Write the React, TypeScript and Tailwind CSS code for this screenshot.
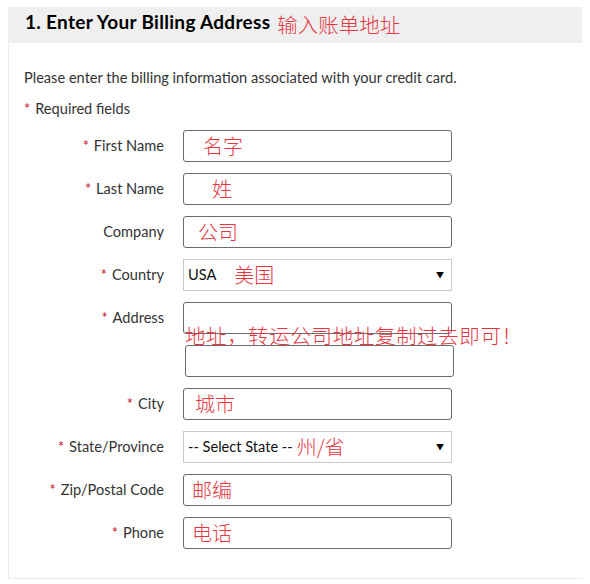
const RED = 'text-[#e5353f]';

function Label({ text, required }: { text: string; required?: boolean }) {
  return (
    <div className="w-[155px] shrink-0 text-right text-[14.6px] text-[#333]">
      {required && <span className="text-[#c8102e] mr-[5px]">*</span>}
      {text}
    </div>
  );
}

function Box({ note, pad }: { note?: string; pad: string }) {
  return (
    <div className={`w-[269px] h-[32px] border border-[#6b6b6b] rounded-[3px] flex items-center ${pad}`}>
      <span className={`${RED} text-[20px] leading-none cjk`}>{note}</span>
    </div>
  );
}

function Select({ value, note, gap }: { value: string; note: string; gap: string }) {
  return (
    <div className="w-[269px] h-[32px] border border-[#c8c8c8] flex items-center pl-[4px] pr-[7px]">
      <span className="text-[14.6px] text-[#111]">{value}</span>
      <span className={`${RED} text-[20px] leading-none cjk ${gap}`}>{note}</span>
      <span className="ml-auto text-[8px] text-black">▼</span>
    </div>
  );
}

function Row({ label, required, children }: { label: string; required?: boolean; children: React.ReactNode }) {
  return (
    <div className="flex items-center gap-[19px]">
      <Label text={label} required={required} />
      {children}
    </div>
  );
}

export default function App() {
  return (
    <div className="w-[590px] h-[584px] bg-white pt-[7px] pl-[8px]" style={{ fontFamily: 'Lato, "Noto Sans CJK SC", sans-serif' }}>
      <style>{`.cjk{font-family:"Noto Sans CJK SC",sans-serif;font-weight:300}`}</style>
      <div className="w-[574px] h-[572px] border-l border-b border-[#ececec]">
        <div className="h-[36px] bg-[#efefef] flex items-center pl-[16px]">
          <span className="text-[19px] font-bold text-black tracking-[0.3px] -mt-[5px]">1. Enter Your Billing Address</span>
          <span className={`${RED} text-[20.5px] cjk ml-[7px] -mt-[1px]`}>输入账单地址</span>
        </div>
        <p className="mt-[25px] pl-[15px] text-[14.6px] text-[#333] leading-[20px]">
          Please enter the billing information associated with your credit card.
        </p>
        <p className="mt-[11px] pl-[15px] text-[14.6px] text-[#333] leading-[20px]">
          <span className="text-[#c8102e] mr-[5px]">*</span>Required fields
        </p>
        <div className="mt-[11px] flex flex-col gap-[11px]">
          <Row label="First Name" required>
            <Box note="名字" pad="pl-[19px]" />
          </Row>
          <Row label="Last Name" required>
            <Box note="姓" pad="pl-[28px]" />
          </Row>
          <Row label="Company">
            <Box note="公司" pad="pl-[14px]" />
          </Row>
          <Row label="Country" required>
            <Select value="USA" note="美国" gap="ml-[18px]" />
          </Row>
          <div className="flex gap-[19px] relative">
            <div className="h-[32px] flex items-center">
              <Label text="Address" required />
            </div>
            <div className="flex flex-col gap-[11px]">
              <Box pad="" />
              <div className="ml-[2px]">
                <Box pad="" />
              </div>
            </div>
            <span className={`absolute left-[176px] top-[23px] ${RED} text-[20.5px] leading-none cjk whitespace-nowrap tracking-[0.6px]`}>
              地址，转运公司地址复制过去即可！
            </span>
          </div>
          <Row label="City" required>
            <Box note="城市" pad="pl-[11px]" />
          </Row>
          <Row label="State/Province" required>
            <Select value="-- Select State --" note="州/省" gap="ml-[4px]" />
          </Row>
          <Row label="Zip/Postal Code" required>
            <Box note="邮编" pad="pl-[8px]" />
          </Row>
          <Row label="Phone" required>
            <Box note="电话" pad="pl-[8px]" />
          </Row>
        </div>
      </div>
    </div>
  );
}
